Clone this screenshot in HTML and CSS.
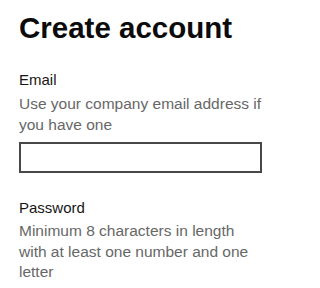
FILE: index.html
```html
<!DOCTYPE html>
<html lang="en">
<head>
<meta charset="utf-8">
<title>Create account</title>
<link rel="stylesheet" href="styles.css">
</head>
<body>
<main class="page">
  <h1 class="title">Create account</h1>
  <div class="field">
    <label class="label" for="email">Email</label>
    <p class="hint">Use your company email address if you have one</p>
    <input class="input" id="email" type="email">
  </div>
  <div class="field field-password">
    <label class="label" for="password">Password</label>
    <p class="hint">Minimum 8 characters in length with at least one number and one letter</p>
  </div>
</main>
</body>
</html>
```
FILE: styles.css
```css
html, body {
  margin: 0;
  padding: 0;
  background: #ffffff;
}
body {
  font-family: "Liberation Sans", Arial, sans-serif;
  color: #111111;
}
.page {
  display: flex;
  flex-direction: column;
  width: 243px;
  padding: 10px 0 0 19px;
}
.title {
  margin: 0;
  font-size: 29.5px;
  line-height: 36px;
  font-weight: 700;
  color: #0b0b0b;
  white-space: nowrap;
}
.field {
  display: flex;
  flex-direction: column;
  margin-top: 24px;
}
.field-password {
  margin-top: 25px;
}
.label {
  display: block;
  font-size: 15px;
  line-height: 20px;
  color: #161616;
}
.hint {
  margin: 4px 0 0;
  font-size: 15.5px;
  line-height: 20.5px;
  color: #676767;
}
.field-password .hint {
  margin-top: 3px;
}
.input {
  box-sizing: border-box;
  margin: 7px 0 0;
  width: 243px;
  height: 31px;
  border: 2px solid #484848;
  border-radius: 0;
  background: #ffffff;
  padding: 0 6px;
  font: inherit;
}
```
